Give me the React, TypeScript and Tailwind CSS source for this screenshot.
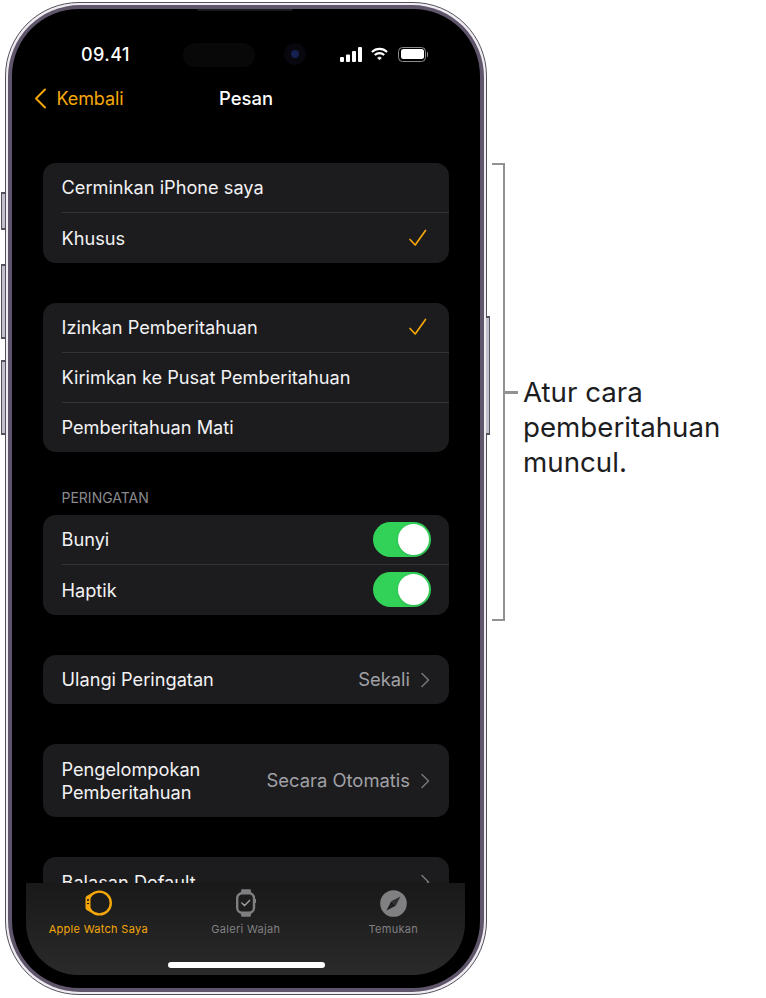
import React from "react";

const font = { fontFamily: "Inter, 'Noto Sans', sans-serif" };

const Check = () => (
  <svg width="20" height="18" viewBox="0 0 20 18" fill="none" className="mr-[3px]">
    <path d="M2 10.5 L7.2 16 L17.5 1.5" stroke="#f5a70a" strokeWidth="1.7" strokeLinecap="round" strokeLinejoin="round" />
  </svg>
);

const Chevron = ({ className = "" }: { className?: string }) => (
  <svg width="10" height="16" viewBox="0 0 10 16" fill="none" className={className}>
    <path d="M2 1.5 L8.5 8 L2 14.5" stroke="#77777c" strokeWidth="1.5" strokeLinecap="round" strokeLinejoin="round" />
  </svg>
);

const Toggle = () => (
  <div className="w-[58px] h-[35px] rounded-full bg-[#32d158] flex items-center justify-end pr-[2px]">
    <div className="w-[31px] h-[31px] rounded-full bg-white shadow-sm" />
  </div>
);

const Row = ({ label, children, last }: { label: string; children?: React.ReactNode; last?: boolean }) => (
  <div className="pl-[18.5px]">
    <div className={`flex items-center justify-between pr-[18px] ${last ? "h-[49.5px]" : "h-[50px] border-b border-[#333336]"}`}>
      <span className="pt-[1px] text-[18.2px] text-[#f2f2f4]">{label}</span>
      {children}
    </div>
  </div>
);

const Card = ({ children, className = "" }: { children: React.ReactNode; className?: string }) => (
  <div className={`bg-[#1c1c1e] rounded-[13px] overflow-hidden ${className}`}>{children}</div>
);

const StatusIcons = () => (
  <div className="flex items-center gap-[8px]">
    <svg width="23" height="15" viewBox="0 0 23 15" fill="white">
      <rect x="0" y="10" width="4" height="5" rx="1" />
      <rect x="6" y="7.5" width="4" height="7.5" rx="1" />
      <rect x="12" y="4" width="4" height="11" rx="1" />
      <rect x="18" y="0" width="4" height="15" rx="1" />
    </svg>
    <svg width="17" height="14" viewBox="0 0 19 15" fill="none" stroke="white" strokeWidth="2.3">
      <path d="M1 5.2 C5.8 0.6 13.2 0.6 18 5.2" />
      <path d="M4.2 8.6 C7.2 5.8 11.8 5.8 14.8 8.6" />
      <path d="M7.5 11.8 C8.6 10.8 10.4 10.8 11.5 11.8 L9.5 14 Z" fill="white" strokeWidth="1" />
    </svg>
    <div className="flex items-center ml-[2px]">
      <div className="w-[28px] h-[15px] rounded-[4.5px] border border-[#8c8c8c] p-[1.5px]">
        <div className="w-full h-full rounded-[2.5px] bg-white" />
      </div>
      <div className="w-[1.5px] h-[5px] bg-[#8c8c8c] rounded-r-sm ml-[0.5px]" />
    </div>
  </div>
);

const WatchSide = () => (
  <svg width="28" height="28" viewBox="0 0 28 28" fill="none">
    <circle cx="15.4" cy="14" r="11.4" stroke="#f5a70a" strokeWidth="2.4" />
    <path d="M7 4.5 L3.5 6.5 Q1.5 7.2 1.5 9 L1.5 19 Q1.5 20.8 3.5 21.5 L7 23.5 L8 21.5 L6.5 20 L6.5 8 L8 6.5 Z" fill="#f5a70a" />
    <circle cx="4" cy="11" r="1.1" fill="#1b1b1b" />
    <rect x="3" y="14" width="2.1" height="1.1" fill="#1b1b1b" />
  </svg>
);

const WatchFront = () => (
  <svg width="20" height="28" viewBox="0 0 20 28" fill="none">
    <path d="M4.5 4.5 L5.5 0.3 L14.5 0.3 L15.5 4.5 Z M4.5 23.5 L5.5 27.7 L14.5 27.7 L15.5 23.5 Z" fill="#7f7f81" />
    <rect x="1.2" y="4.2" width="16.8" height="19.6" rx="5" fill="#1d1d1d" stroke="#7f7f81" strokeWidth="2.4" />
    <rect x="18.7" y="10" width="1.3" height="4" fill="#7f7f81" />
    <path d="M5.8 14 L8.6 16.6 L13.6 11.4" stroke="#9a9a9c" strokeWidth="1.5" strokeLinecap="round" strokeLinejoin="round" />
  </svg>
);

const Compass = () => (
  <svg width="27" height="27" viewBox="0 0 27 27">
    <circle cx="13.5" cy="13.5" r="13.3" fill="#808082" />
    <path d="M20.5 6.5 L15.8 15.8 L11.2 11.2 Z" fill="#303032" />
    <path d="M6.5 20.5 L11.2 11.2 L15.8 15.8 Z" fill="#1f1f21" />
  </svg>
);

const Tab = ({ icon, label, active }: { icon: React.ReactNode; label: string; active?: boolean }) => (
  <div className="w-[147.5px] shrink-0 flex flex-col items-center">
    <div className="h-[28px] flex items-center justify-center">{icon}</div>
    <span className={`mt-[5px] text-[11px] leading-[14px] tracking-[0.3px] ${active ? "text-[#f5a70a]" : "text-[#808083]"}`}>
      {label}
    </span>
  </div>
);

const SideButton = ({ className }: { className: string }) => (
  <div className={`absolute w-[4px] border-y-2 border-l border-[#55505c] bg-[#c4bfcc] rounded-l-[1px] ${className}`} />
);

const App: React.FC = () => {
  return (
    <div className="w-[766px] h-[998px] bg-white overflow-hidden flex pl-[5px] pt-[2px]" style={font}>
      {/* Phone */}
      <div className="relative w-[482px] h-[993px] shrink-0">
        <SideButton className="-left-[4px] top-[190px] h-[38px]" />
        <SideButton className="-left-[4px] top-[262px] h-[75px]" />
        <SideButton className="-left-[4px] top-[358px] h-[75px]" />
        <SideButton className="-right-[3px] top-[314px] h-[119px] rotate-180" />

        <div className="w-full h-full rounded-[74px] border border-[#55505c] bg-[#efecf1] p-[2px]">
          <div className="w-full h-full rounded-[72px] bg-[#5f566b] p-[4px]">
            <div className="relative w-full h-full rounded-[67px] bg-black overflow-hidden text-white">
              {/* speaker */}
              <div className="absolute left-[185px] top-0 w-[96px] h-[2px] bg-[#1c1c1e] rounded-b-[3px]" />

              {/* dynamic island and camera */}
              <div className="absolute left-[171px] top-[34px] w-[72px] h-[24px] rounded-full bg-[#080808]" />
              <div className="absolute left-[272px] top-[34px] w-[22px] h-[22px] rounded-full bg-[#07070d] flex items-center justify-center">
                <div className="w-[8px] h-[8px] rounded-full bg-[#14204f]" />
              </div>

              {/* status bar */}
              <div className="mt-[33px] h-[24px] flex items-center justify-between pl-[69px] pr-[52px]">
                <span className="text-[18px] font-medium tracking-[0.4px]">09.41</span>
                <StatusIcons />
              </div>

              {/* nav */}
              <div className="relative mt-[17px] h-[30px] flex items-center justify-center">
                <div className="absolute left-[22px] flex items-center gap-[9.5px] text-[#f5a70a]">
                  <svg width="13" height="21" viewBox="0 0 13 21" fill="none">
                    <path d="M11 1.5 L2 10.5 L11 19.5" stroke="#f5a70a" strokeWidth="2" strokeLinecap="round" strokeLinejoin="round" />
                  </svg>
                  <span className="text-[18px] tracking-[-0.1px]">Kembali</span>
                </div>
                <span className="pt-[1px] text-[18.4px] font-medium">Pesan</span>
              </div>

              {/* settings list */}
              <div className="mt-[50px] px-[31px] w-full">
                <Card>
                  <Row label="Cerminkan iPhone saya" />
                  <Row label="Khusus" last>
                    <Check />
                  </Row>
                </Card>

                <Card className="mt-[40px]">
                  <Row label="Izinkan Pemberitahuan">
                    <Check />
                  </Row>
                  <Row label="Kirimkan ke Pusat Pemberitahuan" />
                  <Row label="Pemberitahuan Mati" last />
                </Card>

                <div className="mt-[37px] pl-[18.5px] h-[26px] text-[14px] leading-[18px] text-[#8a8a8e]">PERINGATAN</div>
                <Card>
                  <Row label="Bunyi">
                    <Toggle />
                  </Row>
                  <Row label="Haptik" last>
                    <Toggle />
                  </Row>
                </Card>

                <Card className="mt-[40px]">
                  <Row label="Ulangi Peringatan" last>
                    <div className="pt-[1px] flex items-center gap-[10px] text-[18.4px] text-[#a0a0a5]">
                      Sekali
                      <Chevron className="mr-[1px]" />
                    </div>
                  </Row>
                </Card>

                <Card className="mt-[40px]">
                  <div className="h-[73px] pl-[18.5px] pr-[18px] flex items-center justify-between">
                    <span className="text-[18.2px] leading-[23px] text-[#f2f2f4]">
                      Pengelompokan
                      <br />
                      Pemberitahuan
                    </span>
                    <div className="pt-[1px] flex items-center gap-[10px] text-[18.4px] text-[#a0a0a5]">
                      Secara Otomatis
                      <Chevron className="mr-[1px]" />
                    </div>
                  </div>
                </Card>

                <Card className="mt-[40px]">
                  <Row label="Balasan Default" last>
                    <Chevron className="mr-[1px]" />
                  </Row>
                </Card>
              </div>

              {/* tab bar */}
              <div className="absolute left-[14px] top-[874px] w-[439px] h-[92px] rounded-b-[52px] bg-gradient-to-b from-[#191919] to-[#2a2a2a]">
                <div className="flex pt-[6px] -ml-[1.5px]">
                  <Tab icon={<WatchSide />} label="Apple Watch Saya" active />
                  <Tab icon={<WatchFront />} label="Galeri Wajah" />
                  <Tab icon={<Compass />} label="Temukan" />
                </div>
                <div className="absolute left-[142px] bottom-[7px] w-[157px] h-[6px] rounded-full bg-white" />
              </div>
            </div>
          </div>
        </div>
      </div>

      {/* Annotation */}
      <div className="flex ml-[5px] mt-[161px] items-start">
        <div className="w-[13px] h-[458px] border-y-[2.5px] border-r-[2.5px] border-[#929292]" />
        <div className="flex items-start mt-[212px]">
          <div className="w-[13px] h-[2.5px] bg-[#929292] mt-[16px]" />
          <div className="ml-[5px] text-[27.7px] leading-[35px] text-[#1d1d1f]">
            Atur cara
            <br />
            pemberitahuan
            <br />
            muncul.
          </div>
        </div>
      </div>
    </div>
  );
};

export default App;
